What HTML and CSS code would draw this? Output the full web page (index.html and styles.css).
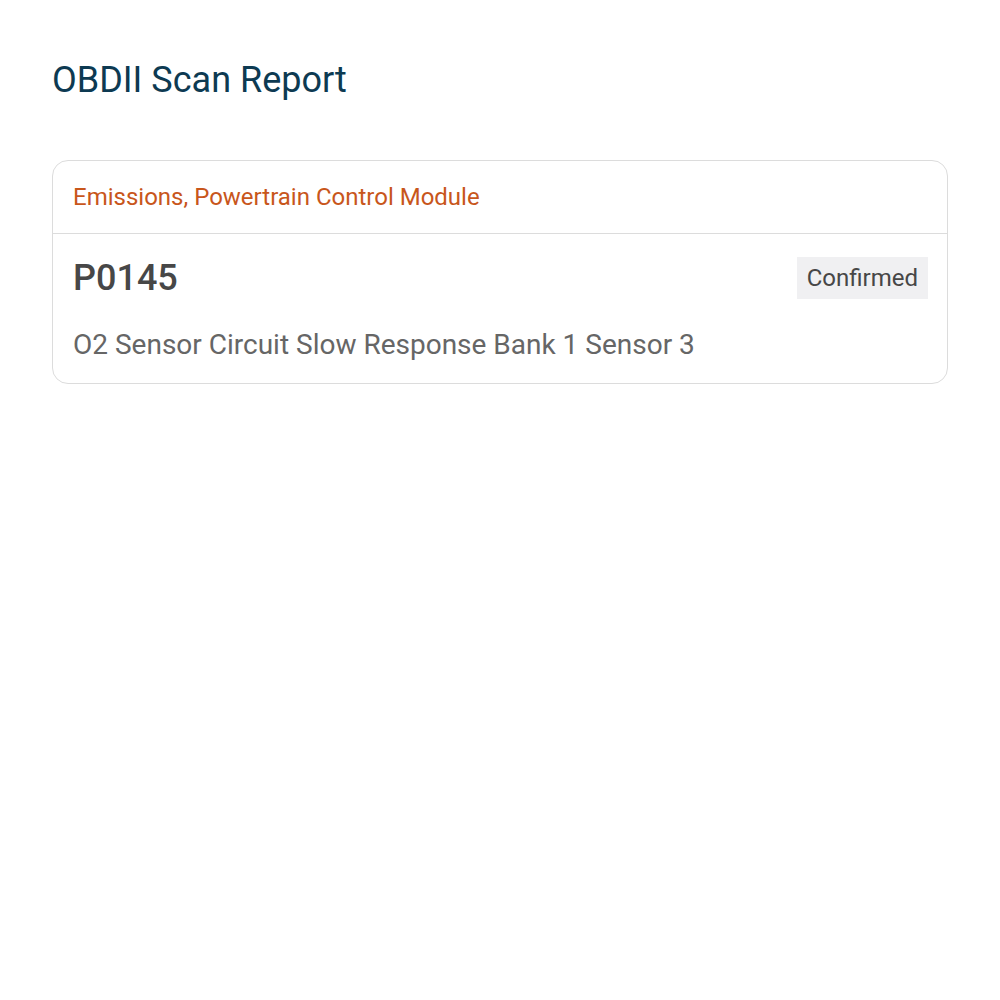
FILE: index.html
```html
<!DOCTYPE html>
<html lang="en">
<head>
    <meta charset="UTF-8">
    <meta name="viewport" content="width=device-width, initial-scale=1.0">
    <title>OBDII Scan Report</title>
    <link rel="stylesheet" href="styles.css">
</head>
<body>
    <div class="report">
        <h1 class="report-title">OBDII Scan Report</h1>
        <div class="dtc-card">
            <div class="dtc-header">Emissions, Powertrain Control Module</div>
            <div class="dtc-body">
                <div class="dtc-row">
                    <span class="dtc-code">P0145</span>
                    <span class="dtc-status">Confirmed</span>
                </div>
                <p class="dtc-desc">O2 Sensor Circuit Slow Response Bank 1 Sensor 3</p>
            </div>
        </div>
    </div>
</body>
</html>
```

FILE: styles.css
```css
:root {
    --title-color: #0d3a52;
    --module-color: #c8561b;
    --code-color: #474747;
    --desc-color: #666666;
    --border-color: #dcdcdc;
    --badge-bg: #f0f0f2;
}

body {
    margin: 0;
    font-family: Roboto, "Noto Sans", Arial, sans-serif;
    background: #ffffff;
}

.report {
    padding: 56px 52px;
}

.report-title {
    margin: 0 0 56px;
    font-size: 36px;
    font-weight: 400;
    line-height: 48px;
    color: var(--title-color);
}

.dtc-card {
    border: 1px solid var(--border-color);
    border-radius: 16px;
}

.dtc-header {
    padding: 20px 20px;
    font-size: 24px;
    line-height: 32px;
    color: var(--module-color);
    border-bottom: 1px solid var(--border-color);
}

.dtc-body {
    padding: 23px 19px 21px 20px;
}

.dtc-row {
    display: flex;
    justify-content: space-between;
    align-items: center;
}

.dtc-code {
    font-size: 36px;
    font-weight: 500;
    line-height: 42px;
    color: var(--code-color);
}

.dtc-status {
    padding: 6px 10px;
    font-size: 24px;
    line-height: 30px;
    color: var(--code-color);
    background: var(--badge-bg);
}

.dtc-desc {
    margin: 29px 0 0;
    font-size: 28px;
    line-height: 34px;
    color: var(--desc-color);
}
```
